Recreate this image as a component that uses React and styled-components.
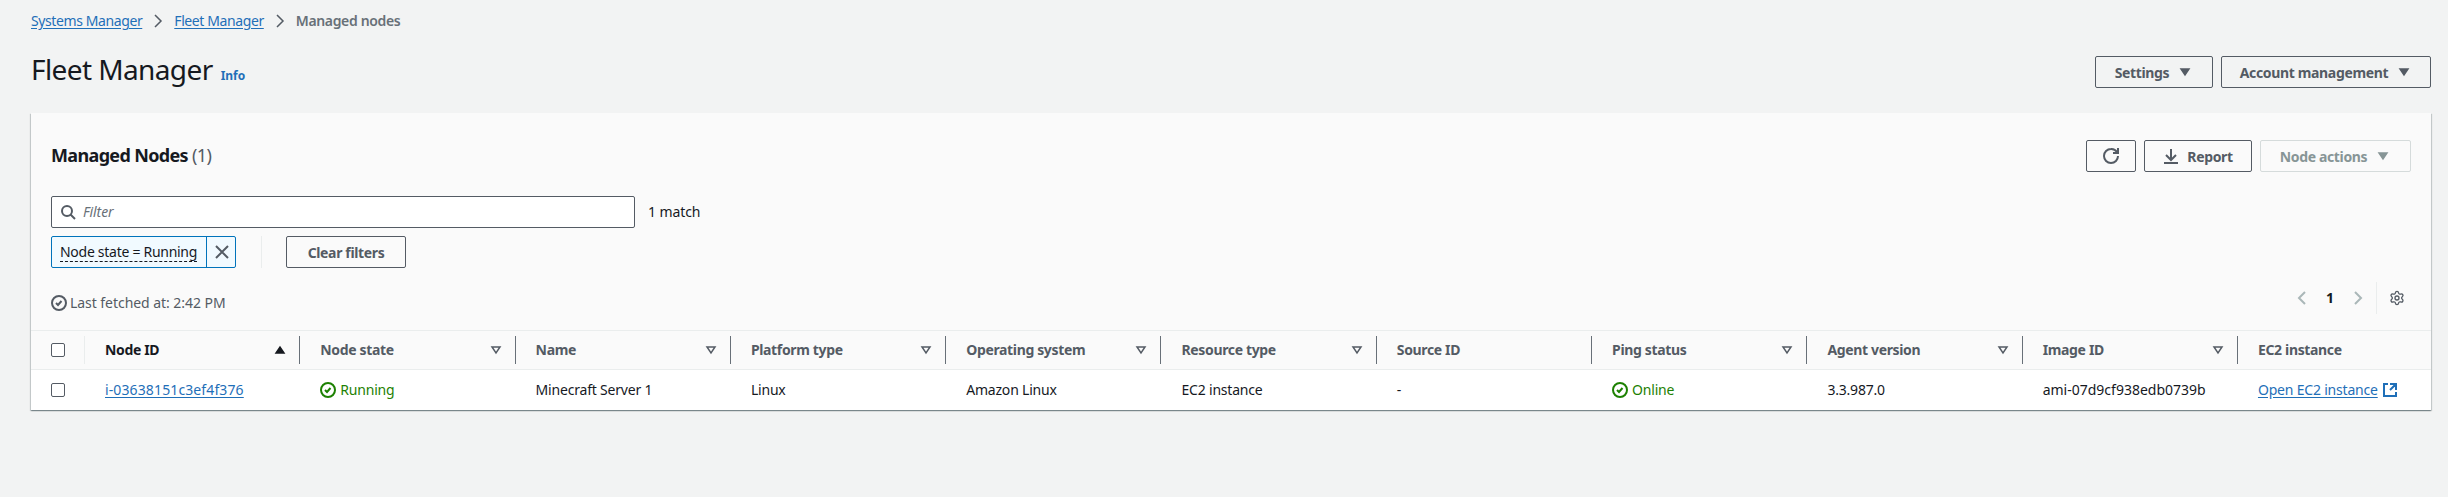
import React from "react";
import styled, { createGlobalStyle } from "styled-components";
import { Settings } from "lucide-react";

const GlobalStyle = createGlobalStyle`
  html, body {
    margin: 0;
    padding: 0;
    background: #f2f3f3;
    color: #16191f;
    font-family: "Noto Sans", "Liberation Sans", sans-serif;
    font-size: 14px;
    line-height: 20px;
  }
`;

const Page = styled.div`
  padding: 0 17px 0 31px;
  height: 497px;
  box-sizing: border-box;
  overflow: hidden;
`;

const Breadcrumbs = styled.nav`
  display: flex;
  align-items: center;
  height: 42px;
`;

const Crumb = styled.a`
  color: #1f6fb8;
  letter-spacing: -0.4px;
  text-decoration: underline;
  text-underline-offset: 2px;
`;

const CrumbCurrent = styled.span`
  color: #687078;
  font-weight: 600;
  letter-spacing: -0.35px;
`;

const CrumbSep = styled.span`
  display: flex;
  width: 32px;
  justify-content: center;
  color: #545b64;
`;

const HeaderRow = styled.header`
  display: flex;
  align-items: center;
  justify-content: space-between;
  height: 32px;
  margin-top: 14px;
`;

const TitleWrap = styled.div`
  display: flex;
  align-items: baseline;
  gap: 8px;
  padding-bottom: 6px;
`;

const Title = styled.h1`
  margin: 0;
  font-size: 28px;
  line-height: 36px;
  font-weight: 400;
  letter-spacing: -0.6px;
`;

const InfoLink = styled.a`
  color: #1f6fb8;
  font-size: 12px;
  font-weight: 700;
`;

const Actions = styled.div`
  display: flex;
  gap: 8px;
`;

const Button = styled.button`
  display: flex;
  align-items: center;
  justify-content: center;
  gap: 8px;
  box-sizing: border-box;
  height: 32px;
  width: ${(props) => props.$width}px;
  padding: 0;
  background: transparent;
  border: 1px solid ${(props) => (props.disabled ? "#d5dbdb" : "#545b64")};
  border-radius: 2px;
  color: ${(props) => (props.disabled ? "#879596" : "#545b64")};
  font-family: inherit;
  font-size: 14px;
  font-weight: 700;
  letter-spacing: -0.35px;
`;

const Card = styled.section`
  margin-top: 25px;
  background: #fafafa;
  box-shadow: 0 1px 1px 0 rgba(0, 28, 36, 0.3), 1px 1px 1px 0 rgba(0, 28, 36, 0.15),
    -1px 1px 1px 0 rgba(0, 28, 36, 0.15);
`;

const CardHead = styled.div`
  display: flex;
  align-items: center;
  justify-content: space-between;
  padding: 27px 20px 0;
  height: 32px;
`;

const CardTitle = styled.h2`
  margin: 0;
  padding-bottom: 2px;
  font-size: 18px;
  line-height: 22px;
  font-weight: 700;
  letter-spacing: -0.65px;
`;

const Count = styled.span`
  color: #545b64;
  font-weight: 400;
`;

const FilterRow = styled.div`
  display: flex;
  align-items: center;
  gap: 13px;
  margin: 24px 0 0 20px;
  letter-spacing: -0.1px;
`;

const FilterBox = styled.div`
  display: flex;
  align-items: center;
  gap: 7px;
  box-sizing: border-box;
  width: 584px;
  height: 32px;
  padding: 0 8px;
  background: #fff;
  border: 1px solid #545b64;
  border-radius: 2px;
  color: #545b64;
`;

const Placeholder = styled.span`
  font-style: italic;
  color: #687078;
`;

const TokenRow = styled.div`
  display: flex;
  align-items: center;
  margin: 8px 0 0 20px;
`;

const Token = styled.div`
  display: flex;
  align-items: stretch;
  box-sizing: border-box;
  width: 185px;
  height: 32px;
  background: #f1faff;
  border: 1px solid #0073bb;
  border-radius: 2px;
`;

const TokenLabel = styled.span`
  flex: 1;
  align-self: center;
  margin: 0 9px 0 8px;
  line-height: 18px;
  letter-spacing: -0.28px;
  white-space: nowrap;
  border-bottom: 1px dashed #16191f;
`;

const TokenClose = styled.span`
  display: flex;
  align-items: center;
  justify-content: center;
  flex: 0 0 29px;
  border-left: 1px solid #0073bb;
  color: #545b64;
`;

const VDivider = styled.span`
  width: 1px;
  height: 32px;
  margin: 0 24px 0 25px;
  background: #eaeded;
`;

const StatusBar = styled.div`
  display: flex;
  justify-content: space-between;
  height: 32px;
  margin-top: 14px;
  padding: 0 20px;
`;

const Fetched = styled.span`
  display: flex;
  align-items: center;
  align-self: flex-end;
  gap: 3px;
  margin-bottom: 1px;
  color: #545b64;
  letter-spacing: -0.05px;
`;

const Pager = styled.div`
  display: flex;
  align-items: center;
  padding-right: 6px;
`;

const PagerBtn = styled.span`
  display: flex;
  justify-content: center;
  width: 28px;
  color: #aab7b8;
`;

const PageNum = styled.span`
  width: 28px;
  text-align: center;
  font-weight: 700;
`;

const PagerDivider = styled.span`
  width: 1px;
  height: 32px;
  margin: 0 12px 0 4px;
  background: #eaeded;
`;

const Row = styled.div`
  display: grid;
  grid-template-columns: 54px repeat(10, 215.3px) 1fr;
  align-items: center;
  box-sizing: border-box;
  height: 40px;
  background: #fff;
`;

const HeadRow = styled(Row)`
  margin-top: 16px;
  background: #fafafa;
  border-top: 1px solid #eaeded;
  border-bottom: 1px solid #eaeded;
`;

const CheckCell = styled.div`
  display: flex;
  align-items: center;
  height: 28px;
  padding-left: 20px;
  border-right: ${(props) => (props.$head ? "1px solid #eaeded" : "none")};
  box-sizing: border-box;
`;

const Checkbox = styled.span`
  display: block;
  box-sizing: border-box;
  width: 14px;
  height: 14px;
  background: #fff;
  border: 1px solid #545b64;
  border-radius: 2px;
`;

const HeadCell = styled.div`
  display: flex;
  align-items: center;
  justify-content: space-between;
  box-sizing: border-box;
  height: 28px;
  padding: 0 11px 0 20px;
  border-right: ${(props) => (props.$last ? "none" : "1px solid #687078")};
  color: ${(props) => (props.$sorted ? "#16191f" : "#545b64")};
  font-weight: 700;
  letter-spacing: -0.35px;
  white-space: nowrap;
`;

const Cell = styled.div`
  display: flex;
  align-items: center;
  padding-left: 20px;
  letter-spacing: ${(props) => props.$spacing || "-0.2px"};
  white-space: nowrap;
`;

const TableLink = styled.a`
  color: #1f6fb8;
  text-decoration: underline;
  text-underline-offset: 2px;
`;

const Status = styled.span`
  display: flex;
  align-items: center;
  gap: 4px;
  color: #1d8102;
`;

const ExternalWrap = styled.span`
  display: flex;
  align-items: center;
  gap: 4px;
  color: #1f6fb8;
`;

const Icon = ({ children, size = 16, width = 2 }) => (
  <svg
    width={size}
    height={size}
    viewBox="0 0 16 16"
    fill="none"
    stroke="currentColor"
    strokeWidth={width}
    style={{ display: "block", flexShrink: 0 }}
  >
    {children}
  </svg>
);

const CaretDown = () => (
  <Icon>
    <path d="M4 5h8l-4 6-4-6z" fill="currentColor" strokeWidth="1.5" />
  </Icon>
);

const CaretUp = () => (
  <Icon>
    <path d="M4 11h8L8 5l-4 6z" fill="#16191f" stroke="#16191f" strokeWidth="1.5" />
  </Icon>
);

const FilterCaret = () => (
  <Icon>
    <path d="M4 5h8l-4 6-4-6z" strokeWidth="1.5" />
  </Icon>
);

const CheckCircle = () => (
  <Icon>
    <circle cx="8" cy="8" r="7" />
    <path d="M5 8l2 2 3.5-4" />
  </Icon>
);

const Chevron = ({ left, width }) => (
  <Icon width={width}>
    <path d={left ? "M11 2 5 8l6 6" : "M5 2l6 6-6 6"} />
  </Icon>
);

const columns = [
  { label: "Node ID", sorted: true },
  { label: "Node state" },
  { label: "Name" },
  { label: "Platform type" },
  { label: "Operating system" },
  { label: "Resource type" },
  { label: "Source ID", plain: true },
  { label: "Ping status" },
  { label: "Agent version" },
  { label: "Image ID" },
  { label: "EC2 instance", plain: true, last: true },
];

const App = () => {
  return (
    <Page>
      <GlobalStyle />
      <Breadcrumbs>
        <Crumb>Systems Manager</Crumb>
        <CrumbSep>
          <Chevron width={1.5} />
        </CrumbSep>
        <Crumb>Fleet Manager</Crumb>
        <CrumbSep>
          <Chevron width={1.5} />
        </CrumbSep>
        <CrumbCurrent>Managed nodes</CrumbCurrent>
      </Breadcrumbs>

      <HeaderRow>
        <TitleWrap>
          <Title>Fleet Manager</Title>
          <InfoLink>Info</InfoLink>
        </TitleWrap>
        <Actions>
          <Button $width={118}>
            Settings <CaretDown />
          </Button>
          <Button $width={210}>
            Account management <CaretDown />
          </Button>
        </Actions>
      </HeaderRow>

      <Card>
        <CardHead>
          <CardTitle>
            Managed Nodes <Count>(1)</Count>
          </CardTitle>
          <Actions>
            <Button $width={50}>
              <Icon>
                <path d="M10 5h5V0" />
                <path d="M15 8a6.99 6.99 0 0 1-7 7 6.99 6.99 0 0 1-7-7 6.99 6.99 0 0 1 7-7 6.99 6.99 0 0 1 6 3" />
              </Icon>
            </Button>
            <Button $width={108}>
              <Icon>
                <path d="M1 15h14M8 1v10M3 7l5 5 5-5" />
              </Icon>
              Report
            </Button>
            <Button $width={151} disabled>
              Node actions <CaretDown />
            </Button>
          </Actions>
        </CardHead>

        <FilterRow>
          <FilterBox>
            <Icon>
              <circle cx="7" cy="7" r="5" />
              <path d="m15 15-4.5-4.5" />
            </Icon>
            <Placeholder>Filter</Placeholder>
          </FilterBox>
          <span>1 match</span>
        </FilterRow>

        <TokenRow>
          <Token>
            <TokenLabel>Node state = Running</TokenLabel>
            <TokenClose>
              <Icon>
                <path d="m2 2 12 12M14 2 2 14" />
              </Icon>
            </TokenClose>
          </Token>
          <VDivider />
          <Button $width={120}>Clear filters</Button>
        </TokenRow>

        <StatusBar>
          <Fetched>
            <CheckCircle />
            Last fetched at: 2:42 PM
          </Fetched>
          <Pager>
            <PagerBtn>
              <Chevron left />
            </PagerBtn>
            <PageNum>1</PageNum>
            <PagerBtn>
              <Chevron />
            </PagerBtn>
            <PagerDivider />
            <Settings size={16} color="#545b64" strokeWidth={2} />
          </Pager>
        </StatusBar>

        <HeadRow>
          <CheckCell $head>
            <Checkbox />
          </CheckCell>
          {columns.map((col) => (
            <HeadCell key={col.label} $sorted={col.sorted} $last={col.last}>
              {col.label}
              {col.sorted && <CaretUp />}
              {!col.sorted && !col.plain && <FilterCaret />}
            </HeadCell>
          ))}
        </HeadRow>
        <Row>
          <CheckCell>
            <Checkbox />
          </CheckCell>
          <Cell $spacing="0.12px">
            <TableLink>i-03638151c3ef4f376</TableLink>
          </Cell>
          <Cell>
            <Status>
              <CheckCircle />
              Running
            </Status>
          </Cell>
          <Cell>Minecraft Server 1</Cell>
          <Cell>Linux</Cell>
          <Cell>Amazon Linux</Cell>
          <Cell>EC2 instance</Cell>
          <Cell>-</Cell>
          <Cell>
            <Status>
              <CheckCircle />
              Online
            </Status>
          </Cell>
          <Cell>3.3.987.0</Cell>
          <Cell $spacing="0">ami-07d9cf938edb0739b</Cell>
          <Cell>
            <ExternalWrap>
              <TableLink>Open EC2 instance</TableLink>
              <Icon>
                <path d="M14 8.01v-6H8M14.02 2 8 8.01M6 2.01H2v12h12v-3.99" />
              </Icon>
            </ExternalWrap>
          </Cell>
        </Row>
      </Card>
    </Page>
  );
};

export default App;
